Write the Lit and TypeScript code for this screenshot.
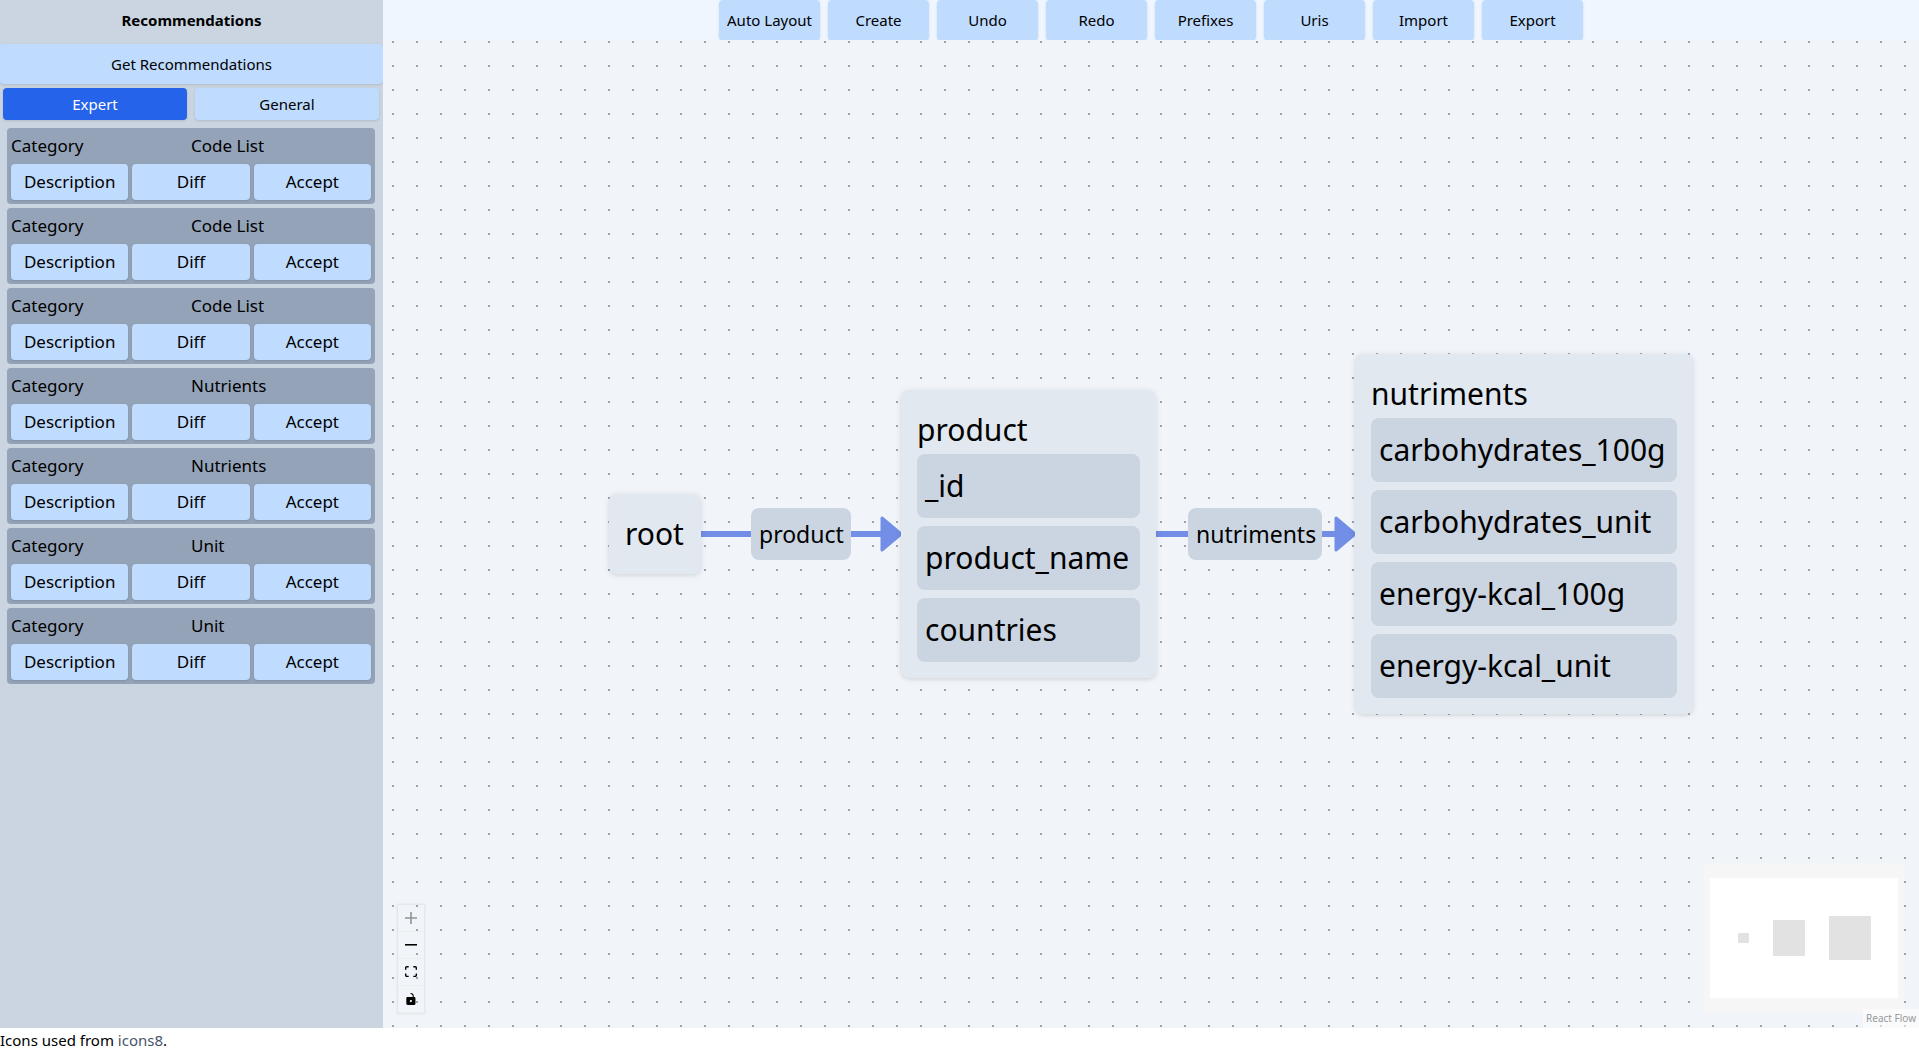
import { LitElement, html, css } from "lit";
import { customElement, state } from "lit/decorators.js";

interface GraphNode {
  id: string;
  x: number;
  y: number;
  width: number;
  fields: string[];
}

interface EdgeLabel {
  text: string;
  x: number;
  y: number;
  width: number;
}

const ACTIONS = ["Auto Layout", "Create", "Undo", "Redo", "Prefixes", "Uris", "Import", "Export"];

const CATEGORIES = ["Code List", "Code List", "Code List", "Nutrients", "Nutrients", "Unit", "Unit"];

const NODES: GraphNode[] = [
  { id: "root", x: 226, y: 454, width: 92, fields: [] },
  { id: "product", x: 518, y: 350, width: 255, fields: ["_id", "product_name", "countries"] },
  {
    id: "nutriments",
    x: 972,
    y: 314,
    width: 338,
    fields: ["carbohydrates_100g", "carbohydrates_unit", "energy-kcal_100g", "energy-kcal_unit"],
  },
];

const LABELS: EdgeLabel[] = [
  { text: "product", x: 368, y: 468, width: 100 },
  { text: "nutriments", x: 805, y: 468, width: 134 },
];

@customElement("app-root")
export class AppRoot extends LitElement {
  @state() private tab = "Expert";

  static styles = css`
    :host {
      display: flex;
      flex-direction: column;
      height: 100vh;
      font-family: "Noto Sans", "Open Sans", sans-serif;
      font-size: 15px;
      line-height: 24px;
      color: #000;
      background: #fff;
    }
    * {
      box-sizing: border-box;
    }
    button {
      font: inherit;
      color: inherit;
      border: 0;
      margin: 0;
      padding: 0;
      cursor: pointer;
    }
    .main {
      flex: 1;
      min-height: 0;
      display: grid;
      grid-template-columns: 383fr 1536fr;
    }
    .sidebar {
      background: #cbd5e1;
      display: flex;
      flex-direction: column;
      gap: 4px;
      overflow: auto;
    }
    .title {
      margin: 0;
      padding: 8px 0;
      font-size: 15px;
      font-weight: 700;
      text-align: center;
    }
    .btn {
      background: #bfdbfe;
      border-radius: 4px;
      box-shadow: 0 1px 3px rgba(0, 0, 0, 0.1), 0 1px 2px -1px rgba(0, 0, 0, 0.1);
      white-space: nowrap;
    }
    .tall {
      height: 40px;
      flex: none;
    }
    .tabs {
      display: grid;
      grid-template-columns: 1fr 1fr;
      gap: 8px;
      padding: 0 4px 0 3px;
    }
    .tab {
      height: 32px;
    }
    .active {
      background: #2563eb;
      color: #fff;
    }
    .cards {
      list-style: none;
      margin: 0;
      padding: 4px 8px 0 7px;
      display: flex;
      flex-direction: column;
      gap: 4px;
    }
    .card {
      background: #94a3b8;
      border-radius: 4px;
      padding: 4px;
      font-size: 17px;
    }
    .info {
      display: grid;
      grid-template-columns: 1fr 1fr;
      line-height: 28px;
      padding-bottom: 4px;
    }
    .row {
      display: grid;
      grid-template-columns: repeat(3, 1fr);
      gap: 4px;
    }
    .small {
      height: 36px;
    }
    .workspace {
      display: flex;
      flex-direction: column;
      min-width: 0;
    }
    .toolbar {
      background: #eff6ff;
      display: grid;
      grid-template-columns: repeat(8, 101px);
      justify-content: center;
      gap: 8px;
    }
    .canvas {
      flex: 1;
      position: relative;
      overflow: hidden;
      background-color: #f1f5f9;
    }
    .dots,
    .edges {
      position: absolute;
      inset: 0;
      width: 100%;
      height: 100%;
    }
    .node,
    .label {
      position: absolute;
      border-radius: 8px;
      white-space: nowrap;
    }
    .node {
      background: #e2e8f0;
      padding: 16px;
      font-size: 30px;
      line-height: 48px;
      box-shadow: 0 1px 6px rgba(0, 0, 0, 0.1), 0 2px 4px -1px rgba(0, 0, 0, 0.06);
    }
    .fields {
      list-style: none;
      margin: 0;
      padding: 0;
      display: flex;
      flex-direction: column;
      gap: 8px;
    }
    .field {
      background: #cbd5e1;
      border-radius: 8px;
      padding: 8px;
    }
    .label {
      background: #cbd5e1;
      padding: 8px;
      font-size: 23px;
      line-height: 36px;
      text-align: center;
    }
    .controls {
      position: absolute;
      left: 15px;
      bottom: 15px;
      display: flex;
      flex-direction: column;
      box-shadow: 0 0 2px 1px rgba(0, 0, 0, 0.08);
    }
    .control {
      width: 26px;
      height: 27px;
      background: none;
      border-bottom: 1px solid #eee;
      display: flex;
      align-items: center;
      justify-content: center;
    }
    .control:disabled {
      cursor: default;
      color: rgba(0, 0, 0, 0.4);
    }
    .control svg {
      width: 12px;
      max-height: 12px;
      fill: currentColor;
    }
    .minimap {
      position: absolute;
      right: 15px;
      bottom: 15px;
      width: 200px;
      height: 150px;
    }
    .credit {
      position: absolute;
      right: 0;
      bottom: 0;
      padding: 2px 3px;
      font-size: 10px;
      line-height: 15px;
      color: #999;
      background: rgba(255, 255, 255, 0.5);
      text-decoration: none;
    }
    .footer {
      flex: none;
      height: 24px;
    }
    .link {
      color: #475569;
      text-decoration: none;
    }
  `;

  private renderSidebar() {
    return html`<aside class="sidebar">
      <h1 class="title">Recommendations</h1>
      <button class="btn tall">Get Recommendations</button>
      <div class="tabs">
        ${["Expert", "General"].map(
          (name) => html`<button
            class="btn tab ${this.tab === name ? "active" : ""}"
            @click=${() => (this.tab = name)}
          >${name}</button>`
        )}
      </div>
      <ul class="cards">
        ${CATEGORIES.map(
          (category) => html`<li class="card">
            <div class="info"><span>Category</span><span>${category}</span></div>
            <div class="row">
              <button class="btn small">Description</button>
              <button class="btn small">Diff</button>
              <button class="btn small">Accept</button>
            </div>
          </li>`
        )}
      </ul>
    </aside>`;
  }

  private renderEdges() {
    return html`<svg class="edges" aria-hidden="true">
      <g stroke="#728ee6" fill="#728ee6">
        <path d="M318 494H506M773 494H960" stroke-width="6" />
        <path d="M499 478L518 494L499 510Z M953 478L972 494L953 510Z" stroke-width="3" stroke-linejoin="round" />
      </g>
    </svg>`;
  }

  private renderControls() {
    return html`<div class="controls">
      <button class="control" aria-label="zoom in" disabled>
        <svg viewBox="0 0 32 32"><path d="M32 18.133H18.133V32h-4.266V18.133H0v-4.266h13.867V0h4.266v13.867H32z" /></svg>
      </button>
      <button class="control" aria-label="zoom out">
        <svg viewBox="0 0 32 5"><path d="M0 0h32v4.2H0z" /></svg>
      </button>
      <button class="control" aria-label="fit view">
        <svg viewBox="0 0 32 30"><path d="M3.692 4.63c0-.53.4-.938.939-.938h5.215V0H4.708C2.13 0 0 2.054 0 4.63v5.216h3.692V4.631zM27.354 0h-5.2v3.692h5.17c.53 0 .984.4.984.939v5.215H32V4.631A4.624 4.624 0 0027.354 0zm.954 24.83c0 .532-.4.94-.939.94h-5.215v3.768h5.215c2.577 0 4.631-2.13 4.631-4.707v-5.139h-3.692v5.139zm-23.677.94c-.531 0-.939-.4-.939-.94v-5.138H0v5.139c0 2.577 2.13 4.707 4.708 4.707h5.138V25.77H4.631z" /></svg>
      </button>
      <button class="control" aria-label="toggle interactivity">
        <svg viewBox="0 0 25 32"><path d="M21.333 10.667H19.81V7.619C19.81 3.429 16.38 0 12.19 0c-4.114 1.828-1.37 2.133.305 2.438 1.676.305 4.42 2.59 4.42 5.181v3.048H3.047A3.056 3.056 0 000 13.714v15.238A3.056 3.056 0 003.048 32h18.285a3.056 3.056 0 003.048-3.048V13.714a3.056 3.056 0 00-3.048-3.047zM12.19 24.533a3.056 3.056 0 01-3.047-3.047 3.056 3.056 0 013.047-3.048 3.056 3.056 0 013.048 3.048 3.056 3.056 0 01-3.048 3.047z" /></svg>
      </button>
    </div>`;
  }

  private renderMinimap() {
    return html`<svg class="minimap" viewBox="0 0 200 150" role="img" aria-label="Mini map">
      <rect width="200" height="150" fill="#f6f6f6" />
      <rect x="6" y="15" width="188" height="120" fill="#fff" />
      <g fill="#e2e2e2">
        <rect x="34" y="70" width="11" height="10" rx="1" />
        <rect x="69" y="57" width="32" height="36" rx="1" />
        <rect x="125" y="53" width="42" height="44" rx="1" />
      </g>
    </svg>`;
  }

  private renderCanvas() {
    return html`<div class="canvas">
      <svg class="dots" aria-hidden="true">
        <defs>
          <pattern id="grid" x="9" y="1" width="24" height="24" patternUnits="userSpaceOnUse">
            <rect width="2" height="2" fill="#a0a3a9" />
          </pattern>
        </defs>
        <rect width="100%" height="100%" fill="url(#grid)" />
      </svg>
      ${this.renderEdges()}
      ${LABELS.map(
        (l) => html`<div class="label" style="left:${l.x}px;top:${l.y}px;width:${l.width}px">${l.text}</div>`
      )}
      ${NODES.map(
        (n) => html`<div class="node" style="left:${n.x}px;top:${n.y}px;width:${n.width}px">
          <div>${n.id}</div>
          ${n.fields.length
            ? html`<ul class="fields">${n.fields.map((f) => html`<li class="field">${f}</li>`)}</ul>`
            : ""}
        </div>`
      )}
      ${this.renderControls()} ${this.renderMinimap()}
      <a class="credit" href="https://reactflow.dev">React Flow</a>
    </div>`;
  }

  render() {
    return html`
      <div class="main">
        ${this.renderSidebar()}
        <section class="workspace">
          <nav class="toolbar">
            ${ACTIONS.map((a) => html`<button class="btn tall">${a}</button>`)}
          </nav>
          ${this.renderCanvas()}
        </section>
      </div>
      <footer class="footer">Icons used from <a class="link" href="https://icons8.com">icons8</a>.</footer>
    `;
  }
}
